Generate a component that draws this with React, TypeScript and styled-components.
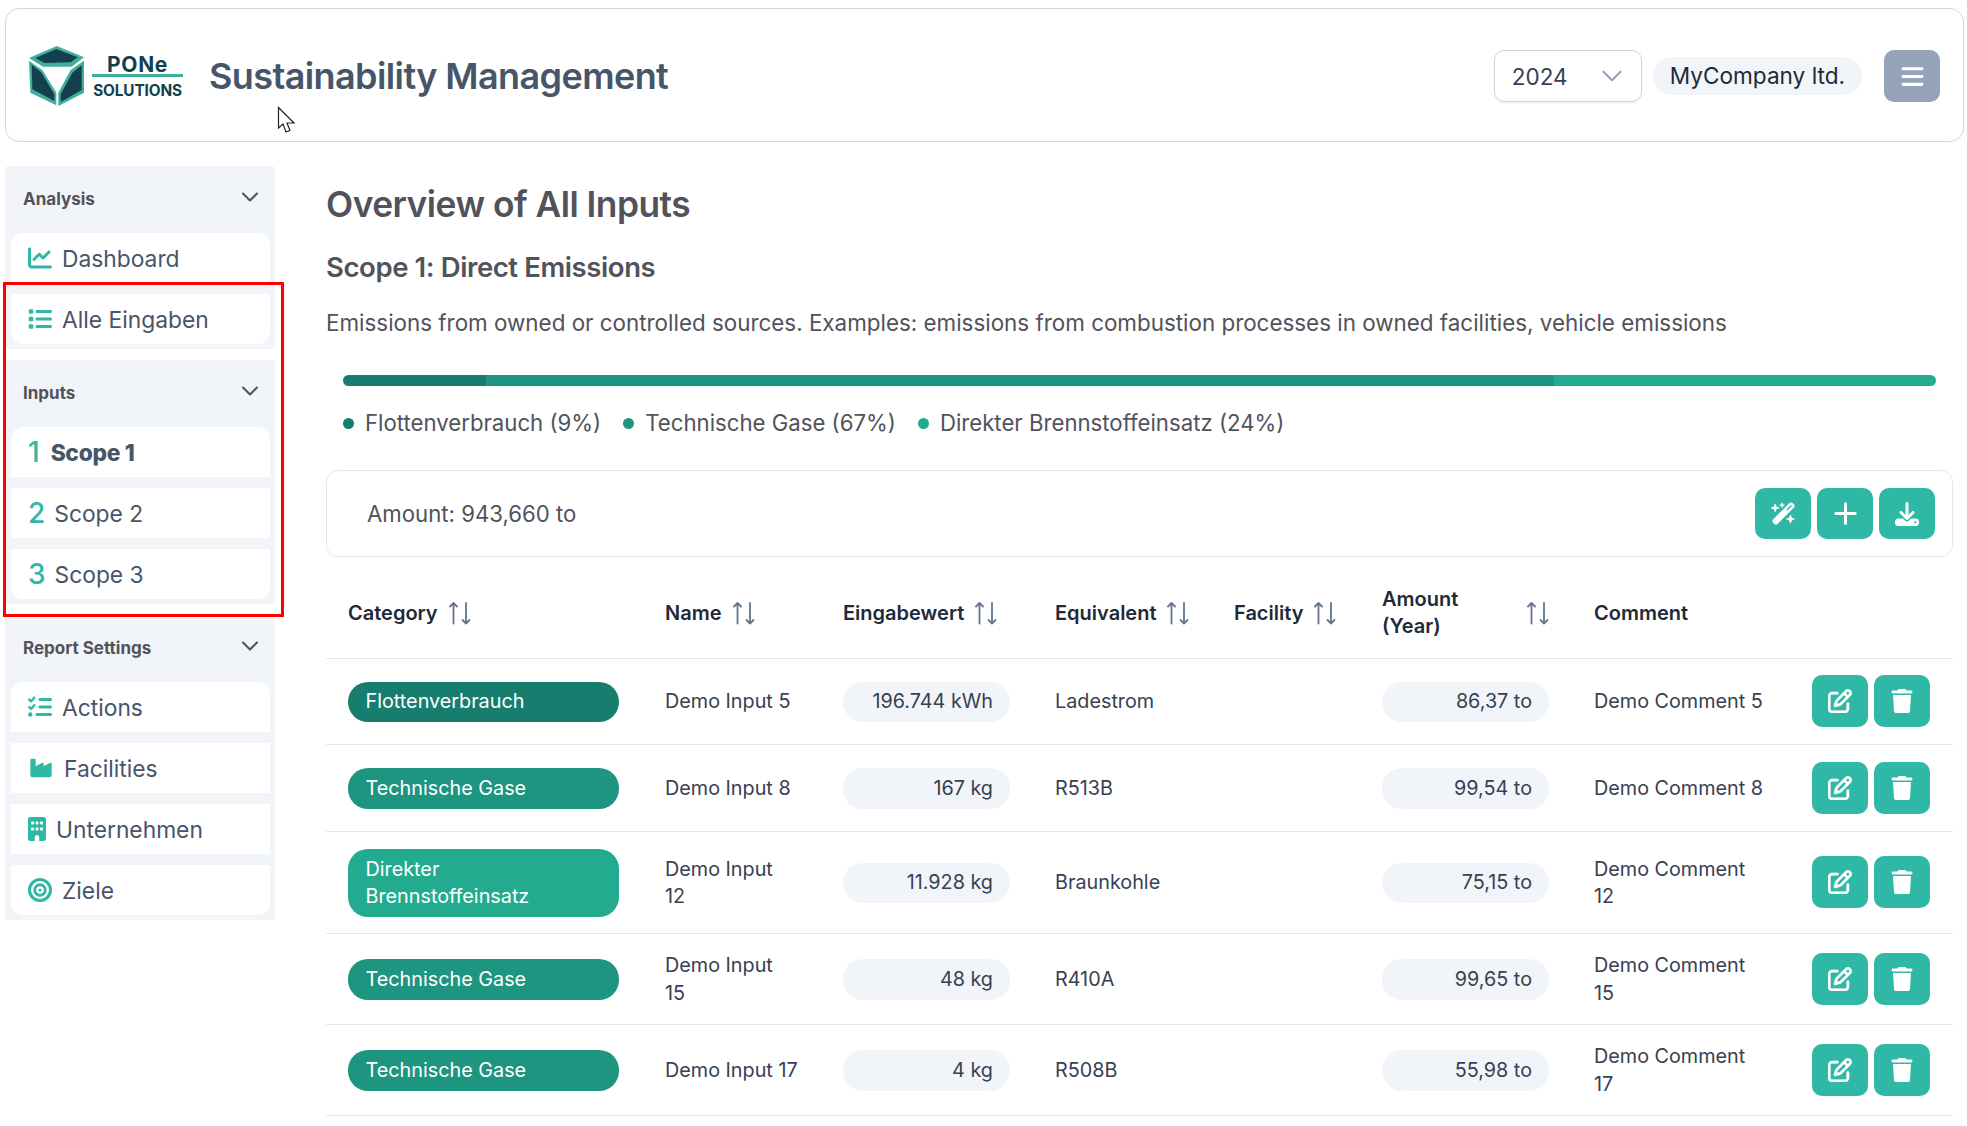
import * as React from "react";
import styled, { createGlobalStyle } from "styled-components";
import {
  FaBars,
  FaBuilding,
  FaBullseye,
  FaChartLine,
  FaDownload,
  FaIndustry,
  FaList,
  FaListCheck,
  FaRegPenToSquare,
  FaTrash,
  FaWandMagicSparkles,
} from "react-icons/fa6";
import { ChevronDown, Plus } from "lucide-react";

const TEAL = "#2fb8a5";
const DARK = "#177e6f";
const MID = "#1e9580";
const LIGHT = "#23ab90";

const GlobalStyle = createGlobalStyle`
  html, body {
    margin: 0;
    background: #fff;
    font-family: Inter, "Liberation Sans", sans-serif;
  }
  * { box-sizing: border-box; }
`;

const Page = styled.div`
  position: relative;
  width: 1967px;
  height: 1126px;
  overflow: hidden;
  padding: 8px 3px 0 5px;
`;

const Header = styled.header`
  display: flex;
  align-items: center;
  height: 134px;
  padding: 2px 23px 0 23px;
  border: 1px solid #d4d6da;
  border-radius: 14px;
`;

const LogoWrap = styled.div`
  display: flex;
  align-items: center;
  gap: 8px;
  margin-right: 26px;
`;

const LogoText = styled.div`
  display: flex;
  flex-direction: column;
  align-items: center;
  width: 91px;
  color: #143f4e;
  font-weight: 700;
`;

const LogoTop = styled.span`
  padding-top: 2px;
  font-size: 21px;
  line-height: 20px;
  letter-spacing: 0.7px;
`;

const LogoLine = styled.span`
  width: 100%;
  height: 3px;
  margin: -1px 0 5px;
  background: #3fae9a;
`;

const LogoBottom = styled.span`
  font-size: 15.3px;
  line-height: 17px;
  letter-spacing: -0.1px;
`;

const AppTitle = styled.h1`
  flex: 1;
  margin: 0;
  color: #475569;
  font-size: 36px;
  font-weight: 600;
  letter-spacing: -0.6px;
`;

const YearSelect = styled.div`
  display: flex;
  align-items: center;
  justify-content: space-between;
  width: 148px;
  height: 52px;
  padding: 0 12px 0 17px;
  border: 1px solid #cbd5e1;
  border-radius: 10px;
  box-shadow: 0 1px 2px rgba(0, 0, 0, 0.08);
  color: #374151;
  font-size: 22.5px;
  svg {
    color: #94a3b8;
  }
`;

const CompanyPill = styled.div`
  margin-left: 11px;
  padding: 0 17px;
  height: 38px;
  border-radius: 19px;
  background: #f1f5f9;
  color: #1f2937;
  font-size: 22.6px;
  line-height: 38px;
`;

const MenuButton = styled.button`
  display: flex;
  align-items: center;
  justify-content: center;
  width: 56px;
  height: 52px;
  margin-left: 22px;
  border: 0;
  border-radius: 10px;
  background: #94a3b8;
  color: #fff;
`;

const Body = styled.div`
  display: flex;
  margin-top: 24px;
`;

const Sidebar = styled.aside`
  display: flex;
  flex-direction: column;
  gap: 11px;
  flex: 0 0 270px;
`;

const Section = styled.section`
  padding: 0 5px 5px 6px;
  border-radius: 4px;
  background: #f1f5f9;
`;

const SectionHead = styled.div`
  display: flex;
  align-items: center;
  justify-content: space-between;
  height: 67px;
  padding: 0 6px 2px 12px;
  color: #52525b;
  font-size: 17px;
  font-weight: 700;
  svg {
    margin-top: -4px;
  }
`;

const Items = styled.div`
  display: flex;
  flex-direction: column;
  gap: 11px;
`;

const Item = styled.a<{ $active?: boolean }>`
  display: flex;
  align-items: center;
  gap: ${(p) => (p.$active ? 12 : 10)}px;
  height: 50px;
  padding: 0 0 0 17px;
  background: #fff;
  color: #475569;
  font-size: 22.8px;
  font-weight: ${(p) => (p.$active ? 800 : 400)};
  letter-spacing: ${(p) => (p.$active ? "-0.3px" : "0")};
  svg {
    color: ${TEAL};
  }
  &:first-child {
    border-radius: 12px 12px 0 0;
  }
  &:last-child {
    border-radius: 0 0 12px 12px;
  }
`;

const FactoryIcon = styled(FaIndustry)`
  margin: 0 1px;
`;

const OfficeIcon = styled(FaBuilding)`
  width: 18px;
`;

const ScopeNumber = styled.span`
  color: ${TEAL};
  font-size: 28px;
  font-weight: 500;
  letter-spacing: -1px;
`;

const Main = styled.main`
  flex: 1;
  min-width: 0;
  margin: 0 11px 0 51px;
`;

const PageTitle = styled.h2`
  margin: 19px 0 0;
  color: #52525b;
  font-size: 35.3px;
  font-weight: 600;
  line-height: 40px;
  letter-spacing: -0.5px;
`;

const ScopeTitle = styled.h3`
  margin: 26px 0 0;
  color: #52525b;
  font-size: 27.5px;
  font-weight: 600;
  line-height: 32px;
  letter-spacing: -0.4px;
`;

const Description = styled.p`
  margin: 24px 0 0;
  color: #52525b;
  font-size: 22.4px;
  line-height: 32px;
`;

const Bar = styled.div`
  display: flex;
  height: 11px;
  margin: 36px 17px 0 17px;
  overflow: hidden;
  border-radius: 6px;
`;

const BarPart = styled.div<{ $color: string; $share: number }>`
  flex: ${(p) => p.$share};
  background: ${(p) => p.$color};
`;

const Legend = styled.div`
  display: flex;
  gap: 22px;
  margin: 21px 0 0 17px;
  color: #52525b;
  font-size: 22.2px;
  line-height: 32px;
`;

const LegendItem = styled.span`
  display: flex;
  align-items: center;
  gap: 11px;
`;

const Dot = styled.i<{ $color: string }>`
  width: 11px;
  height: 11px;
  border-radius: 50%;
  background: ${(p) => p.$color};
`;

const AmountCard = styled.div`
  display: flex;
  align-items: center;
  justify-content: space-between;
  height: 87px;
  margin-top: 31px;
  padding: 0 17px 0 40px;
  border: 1px solid #e2e8f0;
  border-radius: 12px;
  color: #52525b;
  font-size: 22.2px;
`;

const ButtonRow = styled.div`
  display: flex;
  gap: 6px;
`;

const IconButton = styled.button<{ $tall?: boolean }>`
  display: flex;
  align-items: center;
  justify-content: center;
  width: 56px;
  height: ${(p) => (p.$tall ? 52 : 51)}px;
  padding: 0;
  border: 0;
  border-radius: 10px;
  background: ${TEAL};
  color: #fff;
`;

const EditIcon = styled(FaRegPenToSquare)`
  stroke: currentColor;
  stroke-width: 14;
`;

const Table = styled.table`
  width: 100%;
  table-layout: fixed;
  border-collapse: collapse;
`;

const Col = styled.col<{ $w: number }>`
  width: ${(p) => p.$w}px;
`;

const HeadRow = styled.tr`
  height: 101px;
  border-bottom: 1px solid #e2e8f0;
`;

const Th = styled.th`
  padding: 12px 23px 0 22px;
  color: #1f2937;
  font-size: 20px;
  font-weight: 600;
  line-height: 27.5px;
  text-align: left;
  white-space: pre;
`;

const ThInner = styled.div<{ $spread?: boolean }>`
  display: flex;
  align-items: center;
  gap: 11px;
  justify-content: ${(p) => (p.$spread ? "space-between" : "flex-start")};
`;

const SortGlyph = styled.svg`
  flex: none;
  color: #64748b;
`;

const Tr = styled.tr<{ $h: number }>`
  height: ${(p) => p.$h}px;
  border-bottom: 1px solid #e2e8f0;
`;

const Td = styled.td`
  padding: 16px 23px 14px 22px;
  color: #374151;
  font-size: 19.8px;
  line-height: 27.5px;
  white-space: pre;
`;

const ActionCell = styled.td`
  padding: 15px 0 15px 28px;
`;

const CategoryPill = styled.div<{ $color: string }>`
  margin-right: 1px;
  padding: 6.5px 17.5px;
  border-radius: 20px;
  background: ${(p) => p.$color};
  color: #fff;
`;

const ValuePill = styled.div`
  padding: 6.5px 17px;
  border-radius: 20px;
  background: #f1f5f9;
  text-align: right;
`;

const RedFrame = styled.div`
  position: absolute;
  left: 3px;
  top: 282px;
  width: 281px;
  height: 335px;
  border: 3px solid #ff0000;
  pointer-events: none;
`;

const Cursor = styled.svg`
  position: absolute;
  left: 277px;
  top: 106px;
`;

const Logo = () => (
  <svg width="55" height="60" viewBox="0 0 165 180">
    <polygon points="83,0 165,34 128,62 42,62 0,36" fill="#3fae9a" />
    <polygon points="82,9 146,34 125,49 46,51 19,36" fill="#143f4e" />
    <polygon points="0,44 40,72 82,140 82,178 4,140" fill="#3fae9a" />
    <polygon points="8,56 36,78 76,145 76,165 10,130" fill="#143f4e" />
    <polygon points="165,44 165,140 88,180 88,140 125,72" fill="#3fae9a" />
    <polygon points="158,58 158,132 95,168 95,145 130,80" fill="#143f4e" />
  </svg>
);

const SortIcon = () => (
  <SortGlyph width="22" height="24" viewBox="0 0 22 24" fill="none" stroke="currentColor" strokeWidth="1.8" strokeLinecap="round" strokeLinejoin="round">
    <path d="M4.500 22.500V2M1 5.500 4.500 2 8 5.500" />
    <path d="M17 2v20.500M13.500 19 17 22.500 20.500 19" />
  </SortGlyph>
);

const columns = [
  { label: "Category" },
  { label: "Name" },
  { label: "Eingabewert" },
  { label: "Equivalent" },
  { label: "Facility" },
  { label: "Amount\n(Year)", spread: true },
];

const rows = [
  { h: 86, cat: "Flottenverbrauch", color: DARK, name: "Demo Input 5", value: "196.744 kWh", eq: "Ladestrom", amount: "86,37 to", comment: "Demo Comment 5" },
  { h: 87, cat: "Technische Gase", color: MID, name: "Demo Input 8", value: "167 kg", eq: "R513B", amount: "99,54 to", comment: "Demo Comment 8" },
  { h: 102, cat: "Direkter\nBrennstoffeinsatz", color: LIGHT, name: "Demo Input\n12", value: "11.928 kg", eq: "Braunkohle", amount: "75,15 to", comment: "Demo Comment\n12" },
  { h: 91, cat: "Technische Gase", color: MID, name: "Demo Input\n15", value: "48 kg", eq: "R410A", amount: "99,65 to", comment: "Demo Comment\n15" },
  { h: 91, cat: "Technische Gase", color: MID, name: "Demo Input 17", value: "4 kg", eq: "R508B", amount: "55,98 to", comment: "Demo Comment\n17" },
];

const App = () => {
  return (
    <Page>
      <GlobalStyle />
      <Header>
        <LogoWrap>
          <Logo />
          <LogoText>
            <LogoTop>PONe</LogoTop>
            <LogoLine />
            <LogoBottom>SOLUTIONS</LogoBottom>
          </LogoText>
        </LogoWrap>
        <AppTitle>Sustainability Management</AppTitle>
        <YearSelect>
          2024
          <ChevronDown size={34} strokeWidth={1.5} />
        </YearSelect>
        <CompanyPill>MyCompany ltd.</CompanyPill>
        <MenuButton>
          <FaBars size={25} />
        </MenuButton>
      </Header>

      <Body>
        <Sidebar>
          <Section>
            <SectionHead>
              Analysis
              <ChevronDown size={28} strokeWidth={1.8} />
            </SectionHead>
            <Items>
              <Item><FaChartLine size={24} />Dashboard</Item>
              <Item><FaList size={24} />Alle Eingaben</Item>
            </Items>
          </Section>
          <Section>
            <SectionHead>
              Inputs
              <ChevronDown size={28} strokeWidth={1.8} />
            </SectionHead>
            <Items>
              <Item $active><ScopeNumber>1</ScopeNumber>Scope 1</Item>
              <Item><ScopeNumber>2</ScopeNumber>Scope 2</Item>
              <Item><ScopeNumber>3</ScopeNumber>Scope 3</Item>
            </Items>
          </Section>
          <Section>
            <SectionHead>
              Report Settings
              <ChevronDown size={28} strokeWidth={1.8} />
            </SectionHead>
            <Items>
              <Item><FaListCheck size={24} />Actions</Item>
              <Item><FactoryIcon size={24} />Facilities</Item>
              <Item><OfficeIcon size={24} />Unternehmen</Item>
              <Item><FaBullseye size={24} />Ziele</Item>
            </Items>
          </Section>
        </Sidebar>

        <Main>
          <PageTitle>Overview of All Inputs</PageTitle>
          <ScopeTitle>Scope 1: Direct Emissions</ScopeTitle>
          <Description>
            Emissions from owned or controlled sources. Examples: emissions from combustion processes in owned facilities, vehicle emissions
          </Description>
          <Bar>
            <BarPart $color={DARK} $share={9} />
            <BarPart $color={MID} $share={67} />
            <BarPart $color={LIGHT} $share={24} />
          </Bar>
          <Legend>
            <LegendItem><Dot $color={DARK} />Flottenverbrauch (9%)</LegendItem>
            <LegendItem><Dot $color={MID} />Technische Gase (67%)</LegendItem>
            <LegendItem><Dot $color={LIGHT} />Direkter Brennstoffeinsatz (24%)</LegendItem>
          </Legend>
          <AmountCard>
            Amount: 943,660 to
            <ButtonRow>
              <IconButton><FaWandMagicSparkles size={25} /></IconButton>
              <IconButton><Plus size={33} strokeWidth={2.2} /></IconButton>
              <IconButton><FaDownload size={24} /></IconButton>
            </ButtonRow>
          </AmountCard>
          <Table>
            <colgroup>
              {[317, 178, 212, 179, 148, 212, 212, 169].map((w, i) => (
                <Col key={i} $w={w} />
              ))}
            </colgroup>
            <thead>
              <HeadRow>
                {columns.map((c) => (
                  <Th key={c.label}>
                    <ThInner $spread={c.spread}>
                      {c.label}
                      <SortIcon />
                    </ThInner>
                  </Th>
                ))}
                <Th>Comment</Th>
                <Th />
              </HeadRow>
            </thead>
            <tbody>
              {rows.map((r) => (
                <Tr key={r.name} $h={r.h}>
                  <Td><CategoryPill $color={r.color}>{r.cat}</CategoryPill></Td>
                  <Td>{r.name}</Td>
                  <Td><ValuePill>{r.value}</ValuePill></Td>
                  <Td>{r.eq}</Td>
                  <Td />
                  <Td><ValuePill>{r.amount}</ValuePill></Td>
                  <Td>{r.comment}</Td>
                  <ActionCell>
                    <ButtonRow>
                      <IconButton $tall><EditIcon size={24} /></IconButton>
                      <IconButton $tall><FaTrash size={24} /></IconButton>
                    </ButtonRow>
                  </ActionCell>
                </Tr>
              ))}
            </tbody>
          </Table>
        </Main>
      </Body>

      <RedFrame />
      <Cursor width="20" height="30" viewBox="0 0 20 30">
        <path d="M1.500 1.500 V22 L6 18 L9 26 L13 24.500 L10 17 H17 Z" fill="#fff" stroke="#222" strokeWidth="1.2" />
      </Cursor>
    </Page>
  );
};

export default App;
